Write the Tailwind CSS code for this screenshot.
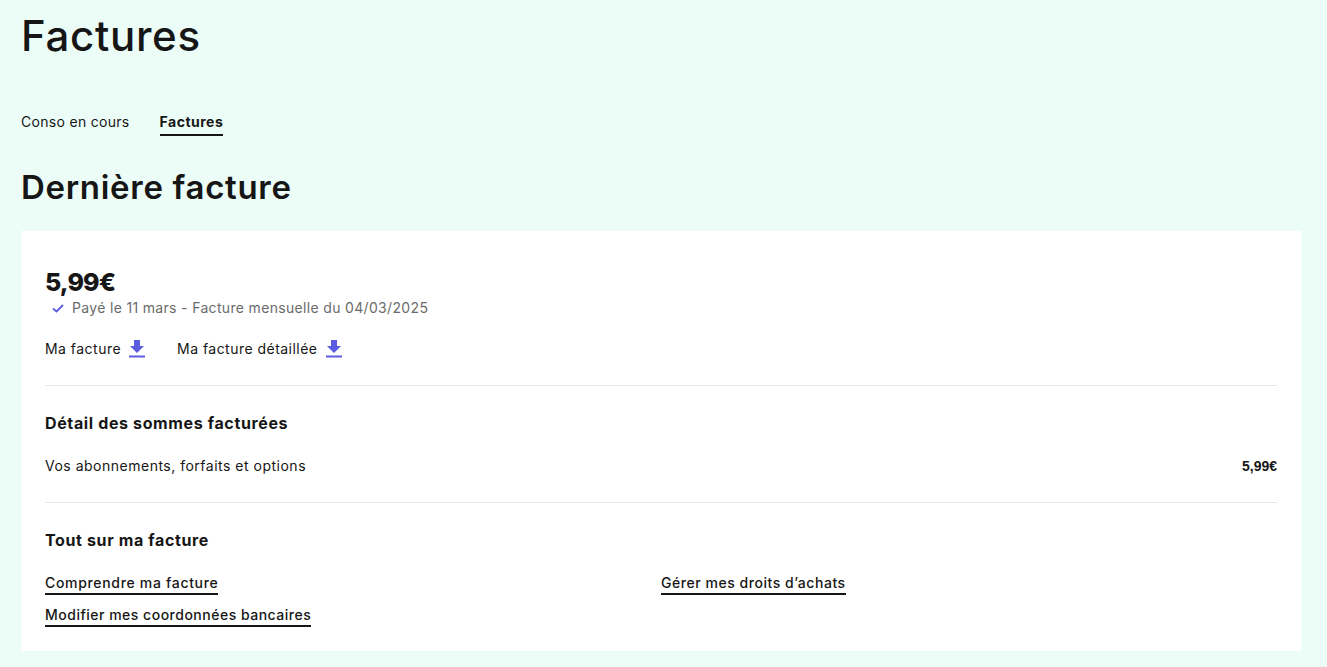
<!DOCTYPE html>
<html lang="fr">
<head>
    <meta charset="UTF-8">
    <title>Factures</title>
    <script src="https://cdn.jsdelivr.net/npm/@tailwindcss/browser@4"></script>
</head>
<body class="bg-[#ecfdf7] font-['Inter',sans-serif] text-[#161616] h-[667px] overflow-hidden">
    <div class="pl-[21px] pr-[26px]">
        <h1 class="text-[42px] leading-[50px] font-medium pt-[11px] tracking-[0.7px]">Factures</h1>

        <!-- tabs -->
        <div class="flex gap-[30px] mt-[51px] text-[14px] leading-[20px]">
            <a class="pb-[2px] tracking-[0.3px]">Conso en cours</a>
            <a class="pb-[2px] font-bold border-b-2 border-[#161616] tracking-[0.5px]">Factures</a>
        </div>

        <h2 class="text-[33px] leading-[40px] font-semibold mt-[31px] tracking-[0.7px]">Dernière facture</h2>

        <div class="bg-white mt-[24px] h-[420px] px-6 pt-[35px]">
            <div class="text-[25px] leading-[32px] font-extrabold tracking-[-0.9px]">5,99€</div>
            <div class="flex items-center pl-[7px] text-[14px] leading-[20px] text-[#6b6b6b] tracking-[0.33px]">
                <svg class="w-3 h-3 mr-[8px]" viewBox="0 0 12 12" fill="none" stroke="#5c5ce0" stroke-width="1.8"><path d="M1 6.5 4.5 9.5 11 3"/></svg>
                <span>Payé le 11 mars - Facture mensuelle du 04/03/2025</span>
            </div>
            <div class="flex gap-8 mt-[21px] text-[14px] leading-[20px] tracking-[0.47px]">
                <a class="flex items-center gap-[8px]">Ma facture
                    <svg class="w-4 h-[18px]" viewBox="0 0 16 18" fill="#5c5ce0"><path d="M5 0h6v6h4l-7 7-7-7h4z"/><rect y="15.5" width="16" height="2"/></svg>
                </a>
                <a class="flex items-center gap-[9px]">Ma facture détaillée
                    <svg class="w-4 h-[18px]" viewBox="0 0 16 18" fill="#5c5ce0"><path d="M5 0h6v6h4l-7 7-7-7h4z"/><rect y="15.5" width="16" height="2"/></svg>
                </a>
            </div>

            <div class="border-t border-[#e8e8e8] mt-[26px] pt-[27px]">
                <h3 class="text-[16px] leading-[20px] font-bold tracking-[0.63px]">Détail des sommes facturées</h3>
                <div class="flex justify-between items-center mt-[23px] text-[14px] leading-[20px]">
                    <span class="tracking-[0.5px]">Vos abonnements, forfaits et options</span>
                    <span class="font-['Liberation_Sans',sans-serif] font-bold text-[14px]">5,99€</span>
                </div>
            </div>

            <div class="border-t border-[#e8e8e8] mt-[26px] pt-[27px]">
                <h3 class="text-[16px] leading-[20px] font-bold tracking-[0.63px]">Tout sur ma facture</h3>
                <div class="grid grid-cols-2 gap-y-[10px] mt-[23px] text-[14px] leading-[20px] font-medium">
                    <div><a class="inline-block border-b-2 border-[#161616] tracking-[0.68px]">Comprendre ma facture</a></div>
                    <div><a class="inline-block border-b-2 border-[#161616] tracking-[0.54px]">Gérer mes droits d’achats</a></div>
                    <div><a class="inline-block border-b-2 border-[#161616] tracking-[0.5px]">Modifier mes coordonnées bancaires</a></div>
                </div>
            </div>
        </div>
    </div>
</body>
</html>
